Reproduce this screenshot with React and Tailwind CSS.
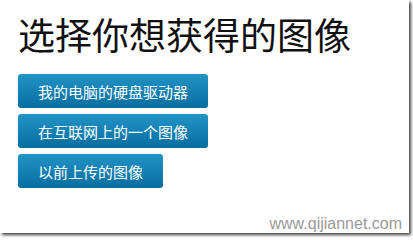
export default function App() {
  const btn =
    "h-[34px] rounded-[3px] bg-gradient-to-b from-[#2393c6] to-[#066e9f] text-white text-[15px] leading-none flex items-center justify-center";
  return (
    <div className="w-[413px] h-[238px] bg-white relative" style={{ fontFamily: '"Noto Sans CJK SC", sans-serif' }}>
      <div className="w-[409px] h-[233px] bg-white shadow-[2px_2px_3px_rgba(0,0,0,0.75)] relative pl-[18px] pt-[13px]">
        <h1 className="text-[37px] leading-[43px] text-[#111] font-normal">选择你想获得的图像</h1>
        <div className="mt-[18px] flex flex-col gap-[6px] items-start">
          <button className={btn + " w-[190px]"}>我的电脑的硬盘驱动器</button>
          <button className={btn + " w-[190px]"}>在互联网上的一个图像</button>
          <button className={btn + " w-[145px]"}>以前上传的图像</button>
        </div>
        <div
          className="absolute right-[7px] bottom-[1px] text-[16px] text-[#9a9a9a] leading-none"
          style={{ fontFamily: '"Liberation Sans", Arial, sans-serif' }}
        >
          www.qijiannet.com
        </div>
      </div>
    </div>
  );
}
